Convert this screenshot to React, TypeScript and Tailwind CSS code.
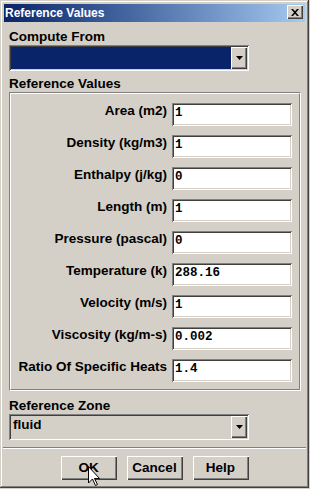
import { Fragment } from "react";

const rows = [
  { label: "Area (m2)", value: "1" },
  { label: "Density (kg/m3)", value: "1" },
  { label: "Enthalpy (j/kg)", value: "0" },
  { label: "Length (m)", value: "1" },
  { label: "Pressure (pascal)", value: "0" },
  { label: "Temperature (k)", value: "288.16" },
  { label: "Velocity (m/s)", value: "1" },
  { label: "Viscosity (kg/m-s)", value: "0.002" },
  { label: "Ratio Of Specific Heats", value: "1.4" },
];

const sunken =
  "shadow-[inset_1px_1px_0_#808080,inset_-1px_-1px_0_#ffffff,inset_2px_2px_0_#404040,inset_-2px_-2px_0_#d4d0c8]";
const raised =
  "shadow-[inset_1px_1px_0_#ffffff,inset_-1px_-1px_0_#404040,inset_-2px_-2px_0_#808080]";
const label = "font-['Liberation_Sans',Arial,sans-serif] font-bold text-[13.5px] leading-[16px] text-black";

function DropArrow() {
  return (
    <div className={`w-[16px] h-full flex items-center justify-center bg-[#d4d0c8] ${raised}`}>
      <svg width="7" height="4" viewBox="0 0 7 4">
        <path d="M0 0h7L3.5 4z" fill="#000" />
      </svg>
    </div>
  );
}

function Combo({ children, selected }: { children?: React.ReactNode; selected?: boolean }) {
  return (
    <div className={`h-[26px] w-[240px] p-[2px] flex bg-[#d4d0c8] ${sunken}`}>
      <div className={`flex-1 pl-[2px] pt-[1px] ${selected ? "bg-[#0a246a]" : ""} ${label}`}>{children}</div>
      <DropArrow />
    </div>
  );
}

function Button({ text, children }: { text: string; children?: React.ReactNode }) {
  return (
    <button
      className={`relative w-[56px] h-[24px] bg-[#d4d0c8] ${raised} ${label} flex items-center justify-center`}
    >
      {text}
      {children}
    </button>
  );
}

export default function App() {
  return (
    <div className="w-[310px] h-[489px] bg-[#d4d0c8]">
      <div
        className="w-[309px] h-[488px] p-[4px] bg-[#d4d0c8] shadow-[inset_-1px_-1px_0_#404040,inset_1px_1px_0_#d4d0c8,inset_-2px_-2px_0_#808080,inset_2px_2px_0_#ffffff] flex flex-col"
      >
        <div className="h-[18px] flex items-start justify-between bg-gradient-to-r from-[#0a246a] to-[#a6caf0]">
          <span className="pl-[1px] font-['Liberation_Sans',Arial,sans-serif] font-bold text-[12px] leading-[18px] text-white">
            Reference Values
          </span>
          <div className={`mt-[1px] mr-[2px] w-[16px] h-[14px] bg-[#d4d0c8] ${raised} flex items-center justify-center`}>
            <svg width="8" height="7" viewBox="0 0 8 7">
              <path d="M0 0h2l2 2.3L6 0h2L5 3.5 8 7H6L4 4.7 2 7H0l3-3.5z" fill="#000" />
            </svg>
          </div>
        </div>

        <div className="pl-[5px] pr-[4px] flex flex-col">
          <div className={`mt-[7px] ${label}`}>Compute From</div>
          <Combo selected />

          <div className={`mt-[5px] ${label}`}>Reference Values</div>
          <div className="border border-t-[#808080] border-l-[#808080] border-b-white border-r-white">
            <div className="border border-t-white border-l-white border-b-[#808080] border-r-[#808080] pt-[9px] pb-[7px] pr-[7px]">
              <div className="grid grid-cols-[1fr_120px] gap-x-[5px] gap-y-[9px]">
                {rows.map((r) => (
                  <Fragment key={r.label}>
                    <div className={`text-right whitespace-nowrap ${label}`}>{r.label}</div>
                    <div
                      className={`h-[23px] p-[2px] pl-[3px] bg-white ${sunken} font-['Liberation_Mono','Courier_New',monospace] font-bold text-[12.5px] leading-[16px] text-black`}
                    >
                      {r.value}
                    </div>
                  </Fragment>
                ))}
              </div>
            </div>
          </div>

          <div className={`mt-[7px] ${label}`}>Reference Zone</div>
          <Combo>fluid</Combo>
        </div>

        <div className="mt-[7px] -mx-[1px] h-[2px] border-t border-t-[#808080] border-b border-b-white" />

        <div className="mt-[7px] flex justify-center gap-[10px]">
          <Button text="OK">
            <svg
              className="absolute left-[27px] top-[10px]"
              width="12"
              height="21"
              viewBox="0 0 12 21"
            >
              <path
                d="M0.5 0.5V17L4.5 13L7.5 19.5L9.5 18.5L6.5 12.5H11.5Z"
                fill="#fff"
                stroke="#000"
                strokeWidth="1"
              />
            </svg>
          </Button>
          <Button text="Cancel" />
          <Button text="Help" />
        </div>
      </div>
    </div>
  );
}
